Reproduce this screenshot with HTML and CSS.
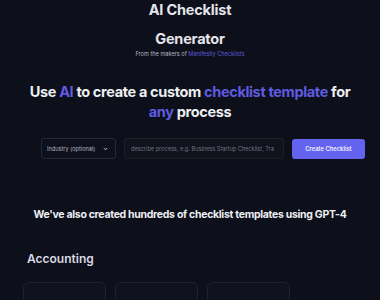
FILE: index.html
```html
<!DOCTYPE html>
<html>
<head>
<meta charset="utf-8">
<link rel="stylesheet" href="styles.css">
</head>
<body>
<main class="page">
  <header class="hero">
    <h1 class="title">AI Checklist<br>Generator</h1>
    <p class="makers">From the makers of <a class="link" href="#">Manifestly Checklists</a></p>
  </header>
  <h2 class="headline">Use <span class="accent">AI</span> to create a custom <span class="accent">checklist template</span> for<br><span class="accent">any</span> process</h2>
  <form class="form">
    <div class="select">
      <span>Industry (optional)</span>
      <svg class="chev" width="5" height="4" viewBox="0 0 5 4"><path d="M0.8 1 L2.5 2.8 L4.2 1" fill="none" stroke="#c9ccd6" stroke-width="0.9"/></svg>
    </div>
    <div class="input">describe process, e.g. Business Startup Checklist, Tra</div>
    <button class="btn" type="button">Create Checklist</button>
  </form>
  <h3 class="also">We've also created hundreds of checklist templates using GPT-4</h3>
  <section class="category">
    <h4 class="cat-title">Accounting</h4>
    <div class="cards">
      <div class="card"></div>
      <div class="card"></div>
      <div class="card"></div>
    </div>
  </section>
</main>
</body>
</html>
```
FILE: styles.css
```css
html, body {
  margin: 0;
  padding: 0;
  background: #0d0f1a;
  height: 100%;
  overflow: hidden;
}
.page {
  font-family: "Inter", "Noto Sans", sans-serif;
  color: #e6e7ec;
  display: flex;
  flex-direction: column;
  align-items: center;
}
.hero {
  display: flex;
  flex-direction: column;
  align-items: center;
}
.title {
  margin: -5.5px 0 0 0;
  font-size: 14.5px;
  line-height: 29px;
  font-weight: 700;
  text-align: center;
  color: #e4e5ea;
  letter-spacing: -0.2px;
}
.makers {
  margin: -3.5px 0 0 0;
  font-size: 5.6px;
  line-height: 10px;
  color: #b7b9c4;
}
.link {
  color: #5c5ad8;
  text-decoration: none;
}
.headline {
  margin: 23px 0 0 0;
  font-size: 14.5px;
  line-height: 20px;
  font-weight: 700;
  text-align: center;
  color: #eeeff3;
  letter-spacing: -0.35px;
  white-space: nowrap;
}
.accent {
  color: #5f5ce0;
}
.form {
  align-self: stretch;
  box-sizing: border-box;
  padding-left: 41px;
  margin-top: 16px;
  display: flex;
  align-items: center;
  gap: 8px;
}
.select {
  box-sizing: border-box;
  width: 75px;
  height: 21px;
  border: 1px solid #262a36;
  border-radius: 3px;
  display: flex;
  align-items: center;
  justify-content: space-between;
  padding: 0 7px 0 5px;
  font-size: 5.6px;
  color: #b4b7c2;
}
.chev {
  display: block;
}
.input {
  box-sizing: border-box;
  width: 160px;
  height: 21px;
  border: 1px solid #1d202b;
  background: #10121c;
  border-radius: 3px;
  display: flex;
  align-items: center;
  padding: 0 6px;
  font-size: 5.6px;
  color: #6f7382;
  white-space: nowrap;
  overflow: hidden;
}
.btn {
  box-sizing: border-box;
  width: 73px;
  height: 20px;
  border: none;
  border-radius: 3px;
  background: #6363ef;
  color: #f2f2ff;
  font-family: "Inter", "Noto Sans", sans-serif;
  font-size: 5.8px;
  font-weight: 600;
  padding: 0;
}
.also {
  margin: 49px 0 0 0;
  font-size: 10.5px;
  line-height: 14px;
  font-weight: 700;
  text-align: center;
  color: #eeeff3;
  letter-spacing: -0.3px;
}
.category {
  align-self: stretch;
  padding: 0 23px;
  margin-top: 29px;
}
.cat-title {
  margin: 0 0 0 4px;
  font-size: 12px;
  line-height: 16px;
  font-weight: 600;
  color: #d8dae2;
}
.cards {
  margin-top: 15px;
  display: flex;
  gap: 9px;
}
.card {
  width: 83px;
  height: 40px;
  box-sizing: border-box;
  border: 1px solid #1e2230;
  border-radius: 6px;
  background: #0f111c;
}
```
